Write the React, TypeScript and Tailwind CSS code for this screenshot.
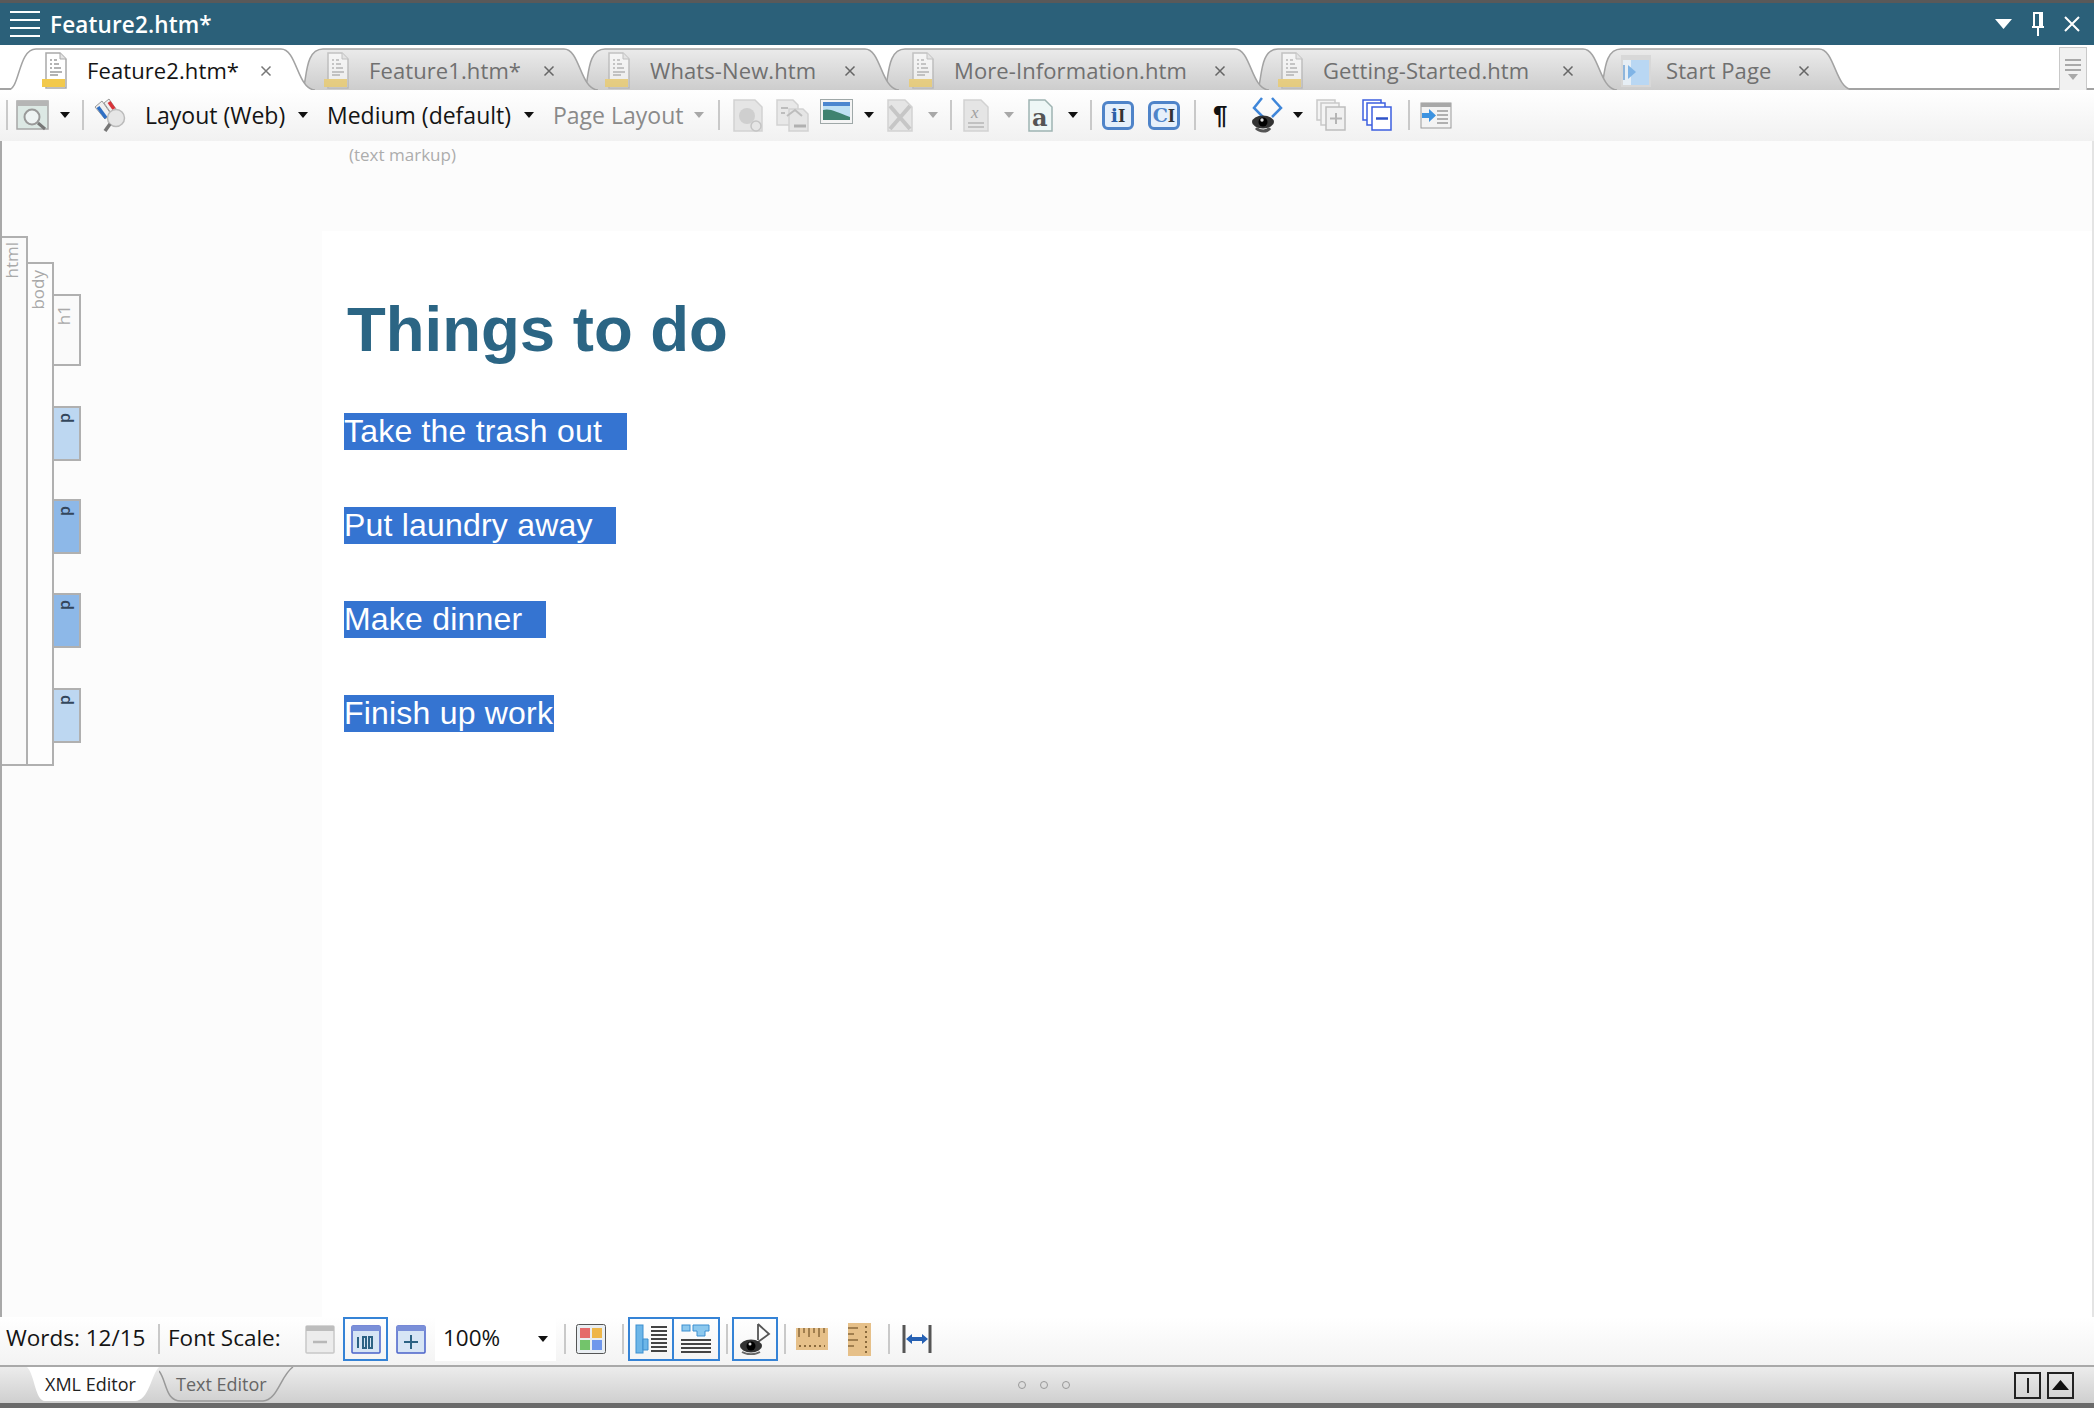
import type { ReactNode } from "react";

const UI_FONT = "font-['Open_Sans','Noto_Sans',sans-serif]";

const tabs = [
  { label: "Feature2.htm*", width: 307, pad: 34, overlap: 0, kind: "doc", active: true },
  { label: "Feature1.htm*", width: 295, pad: 21, overlap: 12, kind: "doc" },
  { label: "Whats-New.htm", width: 314, pad: 20, overlap: 13, kind: "doc" },
  { label: "More-Information.htm", width: 384, pad: 24, overlap: 14, kind: "doc" },
  { label: "Getting-Started.htm", width: 359, pad: 20, overlap: 11, kind: "doc" },
  { label: "Start Page", width: 252, pad: 19, overlap: 16, kind: "start" },
];

const paragraphs = [
  { text: "Take the trash out", width: 283 },
  { text: "Put laundry away", width: 272 },
  { text: "Make dinner", width: 202 },
  { text: "Finish up work", width: 210 },
];

function Svg({ w, h, className, children }: { w: number; h: number; className?: string; children: ReactNode }) {
  return (
    <svg width={w} height={h} viewBox={`0 0 ${w} ${h}`} className={`block shrink-0 ${className ?? ""}`} aria-hidden="true">
      {children}
    </svg>
  );
}

function Caret({ className, light }: { className?: string; light?: boolean }) {
  return (
    <Svg w={10} h={6} className={className}>
      <path d="M0 0h10L5 6z" fill={light ? "#a8a8a8" : "#111"} />
    </Svg>
  );
}

function Sep({ className }: { className?: string }) {
  return <div className={`h-[30px] w-[2px] shrink-0 bg-[#c9c9c9] ${className ?? ""}`} />;
}

function TabDocIcon({ active }: { active?: boolean }) {
  return (
    <Svg w={27} h={38} className={active ? "" : "opacity-60"}>
      <path d="M4 1h14l6 6v29H4z" fill="#fff" stroke="#a9a9a9" strokeWidth="1.5" />
      <path d="M18 1v6h6" fill="#e3e3e3" stroke="#a9a9a9" />
      <path d="M8 8h2M8 12h2M8 16h2M12 8h3M12 12h5M12 16h7M8 20h12M8 23h8" stroke="#9a9a9a" strokeWidth="1.3" />
      <rect x="0" y="27" width="23" height="8" fill="#f2c94c" />
    </Svg>
  );
}

function StartIcon() {
  return (
    <Svg w={32} h={34}>
      <rect x="1" y="1" width="30" height="32" fill="#d8d8d8" />
      <rect x="3" y="6" width="26" height="25" fill="#b9d7f3" />
      <rect x="3" y="6" width="8" height="25" fill="#e6eef5" />
      <path d="M4 11v15" stroke="#8fb6dc" strokeWidth="2" />
      <path d="M8 11l8 7-8 7z" fill="#7fb4e6" />
    </Svg>
  );
}

function Tab({ label, width, pad, overlap, kind, active, z }: (typeof tabs)[number] & { active?: boolean; z: number }) {
  const h = 43;
  const left = active ? `C12 ${h} 10 2 28 2` : `C4 ${h - 12} 2 2 20 2`;
  const shape = `M0 ${h}${left}H${width - 34}C${width - 18} 2 ${width - 18} ${h - 1} ${width} ${h}`;
  return (
    <div
      className="relative flex h-[43px] shrink-0 items-center"
      style={{ width, marginLeft: -overlap, paddingLeft: pad, zIndex: z }}
    >
      <svg className="absolute inset-0" width={width} height={h} viewBox={`0 0 ${width} ${h}`} aria-hidden="true">
        <defs>
          <linearGradient id="tabFill" x1="0" y1="0" x2="0" y2="1">
            <stop offset="0" stopColor="#ebebeb" />
            <stop offset="1" stopColor="#cdcdcd" />
          </linearGradient>
        </defs>
        <path d={`${shape}Z`} fill={active ? "#fff" : "url(#tabFill)"} />
        <path d={shape} fill="none" stroke="#a3a3a3" strokeWidth="1.5" />
      </svg>
      <div className="relative flex w-full items-center pt-[4px] pr-[43px]">
        {kind === "doc" ? <TabDocIcon active={active} /> : <StartIcon />}
        <span className={`text-[22px] tracking-[0.1px] whitespace-nowrap ${kind === "doc" ? "ml-[18px]" : "ml-[14px]"} ${active ? "text-[#141414]" : "text-[#707070]"}`}>
          {label}
        </span>
        <span className="ml-auto">
          <Svg w={12} h={12}>
            <path d="M1.5 1.5l9 9M10.5 1.5l-9 9" stroke={active ? "#777" : "#666"} strokeWidth="1.5" />
          </Svg>
        </span>
      </div>
    </div>
  );
}

function GrayPage({ children, w = 30, h = 33 }: { children?: ReactNode; w?: number; h?: number }) {
  return (
    <Svg w={w} h={h}>
      <path d={`M1 1h${w - 9}l7 7v${h - 9}H1z`} fill="#e5e5e5" stroke="#d2d2d2" strokeWidth="1.5" />
      {children}
    </Svg>
  );
}

function Toolbar() {
  return (
    <div className="flex h-[51px] shrink-0 items-center bg-gradient-to-b from-white to-[#f1f1f1] pb-[1px] text-[23px] text-[#141414]">
      <Sep className="ml-[6px]" />
      <Svg w={33} h={31} className="ml-[8px]">
        <rect x="1" y="1" width="31" height="28" fill="#dce8e4" stroke="#a7a7a7" strokeWidth="1.5" />
        <rect x="1" y="1" width="31" height="5" fill="#b5b5b5" />
        <circle cx="16" cy="17" r="7.5" fill="#eef3f3" stroke="#999" strokeWidth="2" />
        <path d="M22 23l7 6" stroke="#777" strokeWidth="3" />
      </Svg>
      <Caret className="ml-[11px]" />
      <Sep className="ml-[12px]" />
      <Svg w={33} h={34} className="ml-[10px]">
        <path d="M1 9l7-6 9 13-6 5z" fill="#f0f0f0" stroke="#999" />
        <path d="M4 9l8 11" stroke="#2f6fc4" strokeWidth="3.5" />
        <path d="M10 5l5-4 7 10-5 4z" fill="#f0f0f0" stroke="#999" />
        <path d="M15 4l5 7" stroke="#d9343a" strokeWidth="3.5" />
        <circle cx="22" cy="20" r="8.5" fill="#e6e6e6" stroke="#bbb" strokeWidth="1.5" />
        <path d="M16 26l-5 7" stroke="#777" strokeWidth="3.5" />
      </Svg>
      <span className="ml-[18px] w-[153px] whitespace-nowrap">Layout (Web)</span>
      <Caret />
      <span className="ml-[19px] w-[197px] whitespace-nowrap">Medium (default)</span>
      <Caret />
      <span className="ml-[19px] w-[141px] whitespace-nowrap text-[#8a8a8a]">Page Layout</span>
      <Caret light />
      <Sep className="ml-[14px]" />
      <span className="ml-[13px]">
        <GrayPage>
          <circle cx="14" cy="17" r="8" fill="#cfcfcf" />
          <circle cx="23" cy="27" r="5" fill="#e5e5e5" stroke="#c4c4c4" strokeWidth="1.5" />
        </GrayPage>
      </span>
      <span className="ml-[13px]">
        <Svg w={33} h={33}>
          <path d="M1 1h16l5 5v20H1z" fill="#e8e8e8" stroke="#d2d2d2" strokeWidth="1.5" />
          <path d="M13 10h14l5 5v17H13z" fill="#e5e5e5" stroke="#d2d2d2" strokeWidth="1.5" />
          <path d="M5 9h7M5 14h4M11 17l8-6 7 6" stroke="#bdbdbd" strokeWidth="2" fill="none" />
          <path d="M18 27h12" stroke="#b0b0b0" strokeWidth="3" />
        </Svg>
      </span>
      <span className="ml-[11px] -mt-[8px]">
        <Svg w={33} h={25}>
          <rect x="0.5" y="0.5" width="32" height="24" fill="#f4f4f4" stroke="#9fa8a8" />
          <rect x="3" y="3" width="27" height="18" fill="#bfe0f4" />
          <path d="M3 11c7-2 13 2 27 7v3H3z" fill="#3f8270" />
          <rect x="3" y="3" width="27" height="4" fill="#4c86cf" />
        </Svg>
      </span>
      <Caret className="ml-[11px]" />
      <span className="ml-[13px]">
        <GrayPage w={26}>
          <path d="M3 7l20 23M23 7L3 30" stroke="#c6c6c6" strokeWidth="4" />
        </GrayPage>
      </span>
      <Caret light className="ml-[15px]" />
      <Sep className="ml-[12px]" />
      <span className="ml-[11px]">
        <GrayPage w={26}>
          <text x="8" y="19" fontFamily="'Liberation Serif',serif" fontStyle="italic" fontSize="17" fill="#a0a0a0">x</text>
          <path d="M5 24h16M5 28h16" stroke="#b5b5b5" strokeWidth="1.5" />
        </GrayPage>
      </span>
      <Caret light className="ml-[15px]" />
      <span className="ml-[14px]">
        <Svg w={25} h={33}>
          <path d="M1 1h16l7 7v24H1z" fill="#eef7f6" stroke="#9fb4b2" strokeWidth="1.5" />
          <text x="4" y="27" fontFamily="'DejaVu Serif',serif" fontWeight="700" fontSize="24" fill="#555">a</text>
        </Svg>
      </span>
      <Caret className="ml-[15px]" />
      <Sep className="ml-[12px]" />
      <InlineIcon label="i" className="ml-[10px]" />
      <InlineIcon label="C" className="ml-[14px]" />
      <Sep className="ml-[14px]" />
      <span className="ml-[17px] w-[17px] font-['Liberation_Sans',sans-serif] text-[26px] leading-none font-bold text-[#111]">¶</span>
      <Svg w={33} h={36} className="ml-[21px]">
        <path d="M11 1L3 11l9 9M21 1l9 10-9 9" stroke="#3f86d9" strokeWidth="2.5" fill="none" />
        <ellipse cx="12" cy="25" rx="11" ry="6.5" fill="#333" />
        <circle cx="12" cy="25" r="4.5" fill="#000" />
        <circle cx="11" cy="23" r="1.7" fill="#ddd" />
        <path d="M5 31c4 4 11 4 14 0" stroke="#555" strokeWidth="3" fill="none" />
      </Svg>
      <Caret className="ml-[9px]" />
      <Svg w={30} h={32} className="ml-[13px]">
        <path d="M1 1h18v20H1z" fill="#f4f4f4" stroke="#c9c9c9" strokeWidth="1.5" />
        <path d="M5 4h18v22H5z" fill="#f4f4f4" stroke="#c9c9c9" strokeWidth="1.5" />
        <path d="M10 8h19v23H10z" fill="#f0f0f0" stroke="#bdbdbd" strokeWidth="1.5" />
        <path d="M20 14v11M14 19.5h12" stroke="#b5b5b5" strokeWidth="2" />
      </Svg>
      <Svg w={30} h={32} className="ml-[16px]">
        <path d="M1 1h18v20H1z" fill="#fff" stroke="#3c5fe0" strokeWidth="1.5" />
        <path d="M5 4h18v22H5z" fill="#fff" stroke="#3c5fe0" strokeWidth="1.5" />
        <path d="M10 8h19v23H10z" fill="#fff" stroke="#3c5fe0" strokeWidth="1.5" />
        <path d="M14 19.5h12" stroke="#2f53c8" strokeWidth="2.5" />
      </Svg>
      <Sep className="ml-[16px]" />
      <Svg w={32} h={27} className="ml-[10px]">
        <rect x="1" y="1" width="30" height="25" fill="#f3f3f3" stroke="#9a9a9a" />
        <rect x="1" y="1" width="30" height="4" fill="#a8a8a8" />
        <path d="M17 9h11M17 13h11M17 17h11M17 21h11" stroke="#9a9a9a" strokeWidth="1.5" />
        <path d="M2 11h7V7l7 6.5L9 20v-4H2z" fill="#3d93e0" />
      </Svg>
    </div>
  );
}

function InlineIcon({ label, className }: { label: string; className?: string }) {
  return (
    <div
      className={`relative flex h-[29px] w-[32px] shrink-0 items-center justify-center rounded-[6px] border-[3px] border-[#4f84c9] bg-[#e6f0fb] font-['DejaVu_Serif',serif] text-[19px] leading-none font-bold ${label === "i" ? "text-[#2c5fa8]" : "text-[#4f84c9]"} ${className ?? ""}`}
    >
      <span>{label}</span>
      <span className="font-['Liberation_Serif',serif] text-[#333]">I</span>
    </div>
  );
}

function Rail() {
  return (
    <div className="flex w-[320px] shrink-0 items-start bg-[#fcfcfc]">
      <div className="mt-[95px] flex h-[530px] w-[26px] shrink-0 justify-center border-y-2 border-r-2 border-[#b0b0b0] bg-[#fafafa] pt-[4px] pr-[4px]">
        <VLabel>html</VLabel>
      </div>
      <div className="mt-[121px] flex h-[504px] w-[26px] shrink-0 justify-center border-y-2 border-r-2 border-[#b0b0b0] bg-[#fdfdfd] pt-[6px] pr-[4px]">
        <VLabel>body</VLabel>
      </div>
      <div className="mt-[153px] flex w-[27px] shrink-0 flex-col">
        <div className="flex h-[72px] justify-center border-y-2 border-r-2 border-[#b0b0b0] bg-[#fafafa] pt-[9px] pr-[5px]">
          <VLabel>h1</VLabel>
        </div>
        <RailP className="mt-[40px] bg-[#bdd7f1]" />
        <RailP className="mt-[38px] bg-[#8db8e8]" />
        <RailP className="mt-[39px] bg-[#8db8e8]" />
        <RailP className="mt-[40px] bg-[#bdd7f1]" />
      </div>
    </div>
  );
}

function VLabel({ children }: { children: ReactNode }) {
  return <span className="rotate-180 self-start text-[17px] leading-[20px] text-[#a9a9a9] [writing-mode:vertical-rl]">{children}</span>;
}

function RailP({ className }: { className: string }) {
  return (
    <div className={`flex h-[55px] justify-center border-y-2 border-r-2 border-[#b0b0b0] pt-[5px] pr-[5px] ${className}`}>
      <span className="rotate-180 self-start text-[16px] leading-[18px] font-semibold text-[#33465c] [writing-mode:vertical-rl]">p</span>
    </div>
  );
}

function BottomToolbar() {
  return (
    <div className="flex h-[48px] shrink-0 items-center bg-gradient-to-b from-white to-[#f3f3f3] pb-[4px] text-[22.5px] text-[#141414]">
      <span className="mb-[3px] ml-[6px] w-[152px] whitespace-nowrap">Words: 12/15</span>
      <Sep />
      <span className="mb-[3px] ml-[8px] w-[137px] whitespace-nowrap">Font Scale:</span>
      <ScaleButton color="#c8c8c8" bar="#bdbdbd" fill="#ececec">
        <path d="M8 17h14" stroke="#b8b8b8" strokeWidth="2.5" />
      </ScaleButton>
      <div className="ml-[8px] flex h-[44px] w-[45px] shrink-0 items-center justify-center border-2 border-[#3583d6]">
        <ScaleButton color="#4a62c9" bar="#7a8fd8" fill="#d7e5f5">
          <path d="M7 12v11M12 12h3v11h-3zM18 12h3v11h-3z" stroke="#2c6284" strokeWidth="2" fill="none" />
        </ScaleButton>
      </div>
      <ScaleButton className="ml-[8px]" color="#4a62c9" bar="#7a8fd8" fill="#d7e5f5">
        <path d="M8 17h14M15 10v14" stroke="#2c6284" strokeWidth="2" />
      </ScaleButton>
      <div className="ml-[9px] flex h-[44px] w-[121px] shrink-0 items-center justify-between bg-white pr-[8px] pl-[8px]">
        <span className="mb-[3px]">100%</span>
        <Caret />
      </div>
      <Sep className="ml-[8px]" />
      <Svg w={30} h={30} className="ml-[10px]">
        <rect x="0.5" y="0.5" width="29" height="29" rx="2" fill="#e9eef2" stroke="#555" />
        <rect x="4" y="4" width="10" height="10" fill="#e56a6a" />
        <rect x="16" y="4" width="10" height="10" fill="#eeb648" />
        <rect x="4" y="16" width="10" height="10" fill="#73c46b" />
        <rect x="16" y="16" width="10" height="10" fill="#6f97ec" />
      </Svg>
      <Sep className="ml-[16px]" />
      <div className="ml-[4px] flex h-[44px] shrink-0">
        <div className="flex w-[46px] items-center justify-center border-2 border-[#3583d6]">
          <Svg w={33} h={30}>
            <rect x="1" y="1" width="7" height="28" fill="#6db6e8" stroke="#3d8fd0" />
            <path d="M8 15h5v11H8z" fill="#6db6e8" stroke="#3d8fd0" />
            <path d="M16 3h16M16 7h16M16 11h16M16 15h16M16 19h16M16 23h16M16 27h16" stroke="#444" strokeWidth="2" />
          </Svg>
        </div>
        <div className="-ml-[2px] flex w-[48px] items-center justify-center border-2 border-[#3583d6]">
          <Svg w={30} h={30}>
            <rect x="1" y="1" width="8" height="6" fill="#8cc8ee" stroke="#3d8fd0" />
            <path d="M12 1h16v6h-4v5H16V7h-4z" fill="#8cc8ee" stroke="#3d8fd0" />
            <path d="M0 16h30M0 20h30M0 24h30M0 28h30" stroke="#444" strokeWidth="2" />
          </Svg>
        </div>
      </div>
      <Sep className="ml-[6px]" />
      <div className="ml-[4px] flex h-[44px] w-[46px] shrink-0 items-center justify-center border-2 border-[#3583d6]">
        <EyeNote />
      </div>
      <Sep className="ml-[6px]" />
      <Svg w={32} h={22} className="ml-[10px]">
        <rect width="32" height="22" fill="#e6c089" />
        <path d="M3 0v9M8 0v5M13 0v9M18 0v5M23 0v9M28 0v5" stroke="#8a6a3c" strokeWidth="1.5" />
        <path d="M3 18h26" stroke="#8a6a3c" strokeWidth="2" strokeDasharray="2 3" />
      </Svg>
      <Svg w={23} h={33} className="ml-[20px]">
        <rect width="23" height="33" fill="#e6c089" />
        <path d="M0 5h10M0 11h6M0 17h10M0 23h6" stroke="#8a6a3c" strokeWidth="1.5" />
        <path d="M18 3v27" stroke="#8a6a3c" strokeWidth="2" strokeDasharray="2 3" />
      </Svg>
      <Sep className="ml-[17px]" />
      <Svg w={30} h={28} className="ml-[12px]">
        <path d="M2 0v28M28 0v28" stroke="#555" strokeWidth="3" />
        <path d="M4 14l6-5v3h10V9l6 5-6 5v-3H10v3z" fill="#2560b3" />
      </Svg>
    </div>
  );
}

function EyeNote() {
  return (
    <Svg w={32} h={32}>
      <path d="M19 1v16M19 1l11 10-11 8" stroke="#555" strokeWidth="1.8" fill="none" />
      <ellipse cx="12" cy="23" rx="11" ry="6.5" fill="#333" />
      <circle cx="12" cy="23" r="4.5" fill="#000" />
      <circle cx="11" cy="21" r="1.5" fill="#ddd" />
      <path d="M3 29c5 3 13 3 18 0" stroke="#666" strokeWidth="2" fill="none" />
    </Svg>
  );
}

function ScaleButton({ children, className, color, bar, fill }: { children: ReactNode; className?: string; color: string; bar: string; fill: string }) {
  return (
    <Svg w={30} h={29} className={className}>
      <rect x="1" y="1" width="28" height="27" rx="1" fill={fill} stroke={color} strokeWidth="1.5" />
      <rect x="1" y="1" width="28" height="5" fill={bar} />
      {children}
    </Svg>
  );
}

function BottomTabs() {
  return (
    <div className="relative flex h-[38px] shrink-0 items-stretch border-t-2 border-[#a9a9a9] bg-gradient-to-b from-[#ececec] to-[#cfcfcf] text-[18px]">
      <div className="relative ml-[23px] flex h-full w-[140px] items-center pb-[2px] pl-[22px] text-[#222]">
        <svg className="absolute inset-0" width="140" height="36" viewBox="0 0 140 36" aria-hidden="true">
          <path d="M4 0H136C128 8 126 34 112 34H22C12 34 12 8 4 0Z" fill="#fff" />
        </svg>
        <span className="relative">XML Editor</span>
      </div>
      <div className="relative -ml-[4px] flex h-full w-[136px] items-center pb-[2px] pl-[17px] text-[#666]">
        <svg className="absolute inset-0" width="136" height="36" viewBox="0 0 136 36" aria-hidden="true">
          <path d="M0 4C8 14 6 34 22 34H104C118 34 122 8 134 0" fill="none" stroke="#999" strokeWidth="1.5" />
        </svg>
        <span className="relative">Text Editor</span>
      </div>
      <div className="absolute top-[14px] left-[1018px] flex gap-[14px]">
        <span className="h-[8px] w-[8px] rounded-full border border-[#999]" />
        <span className="h-[8px] w-[8px] rounded-full border border-[#999]" />
        <span className="h-[8px] w-[8px] rounded-full border border-[#999]" />
      </div>
      <div className="ml-auto mr-[20px] flex items-center gap-[6px]">
        <div className="flex h-[27px] w-[27px] items-center justify-center border-2 border-[#222]">
          <div className="h-[15px] w-[2px] bg-[#222]" />
        </div>
        <div className="flex h-[27px] w-[27px] items-center justify-center border-2 border-[#222]">
          <Svg w={17} h={10}>
            <path d="M8.5 0L17 10H0z" fill="#111" />
          </Svg>
        </div>
      </div>
    </div>
  );
}

export default function App() {
  return (
    <div className={`flex h-[1408px] w-[2094px] flex-col overflow-hidden bg-white ${UI_FONT}`}>
      <div className="h-[3px] shrink-0 bg-[#595959]" />
      <header className="flex h-[42px] shrink-0 items-center bg-[#2b6079] text-white">
        <div className="ml-[10px] flex w-[30px] flex-col gap-[6px]">
          <div className="h-[2px] bg-white" />
          <div className="h-[2px] bg-white" />
          <div className="h-[2px] bg-white" />
          <div className="h-[2px] bg-white" />
        </div>
        <span className="mt-[1px] ml-[10px] text-[22.5px] font-semibold tracking-[0.15px]">Feature2.htm*</span>
        <div className="ml-auto flex items-center">
          <Svg w={17} h={10}>
            <path d="M0 0h17L8.5 10z" fill="#fff" />
          </Svg>
          <Svg w={14} h={24} className="ml-[19px]">
            <path d="M3 1h8v14H3zM1 15h12M7 15v9" fill="none" stroke="#fff" strokeWidth="2" />
            <path d="M8 2h3v13H8z" fill="#fff" />
          </Svg>
          <Svg w={16} h={16} className="ml-[19px] mr-[14px]">
            <path d="M1 1l14 14M15 1L1 15" stroke="#fff" strokeWidth="2" />
          </Svg>
        </div>
      </header>

      <div className="relative flex h-[45px] shrink-0 items-end overflow-hidden bg-white pl-[8px]">
        <div className="absolute right-0 bottom-0 left-0 h-[2px] bg-[#a3a3a3]" />
        {tabs.map((tab, i) => (
          <Tab key={tab.label} {...tab} z={tabs.length - i} />
        ))}
        <div className="absolute top-[2px] right-[7px] bottom-0 z-10 flex w-[28px] flex-col items-center gap-[3px] border-x border-t border-[#c9c9c9] bg-[#f1f1f1] pt-[11px]">
          <div className="h-[2px] w-[16px] bg-[#a9a9a9]" />
          <div className="h-[2px] w-[16px] bg-[#a9a9a9]" />
          <div className="h-[2px] w-[16px] bg-[#a9a9a9]" />
          <Caret light />
        </div>
      </div>

      <Toolbar />

      <main className="flex min-h-0 flex-1 border-x-2 border-l-[#a9a9a9] border-r-[#e4e4e4]">
        <Rail />
        <div className="flex min-w-0 flex-1 flex-col">
          <div className="h-[90px] shrink-0 bg-[#fcfcfc] pt-[1px] pl-[27px] text-[17px] text-[#adadad]">(text markup)</div>
          <h1 className="mt-[62px] ml-[25px] font-['Liberation_Sans',sans-serif] text-[63.5px] leading-[72px] font-bold text-[#2b6584]">Things to do</h1>
          <div className="mt-[48px] ml-[22px] flex flex-col gap-[57px]">
            {paragraphs.map((p) => (
              <div
                key={p.text}
                className="h-[37px] bg-[#3574d1] font-['Liberation_Sans',sans-serif] text-[32px] leading-[37px] tracking-[0.2px] whitespace-nowrap text-white"
                style={{ width: p.width }}
              >
                {p.text}
              </div>
            ))}
          </div>
        </div>
      </main>

      <BottomToolbar />
      <BottomTabs />
      <div className="h-[5px] shrink-0 bg-[#6a6a6a]" />
    </div>
  );
}
